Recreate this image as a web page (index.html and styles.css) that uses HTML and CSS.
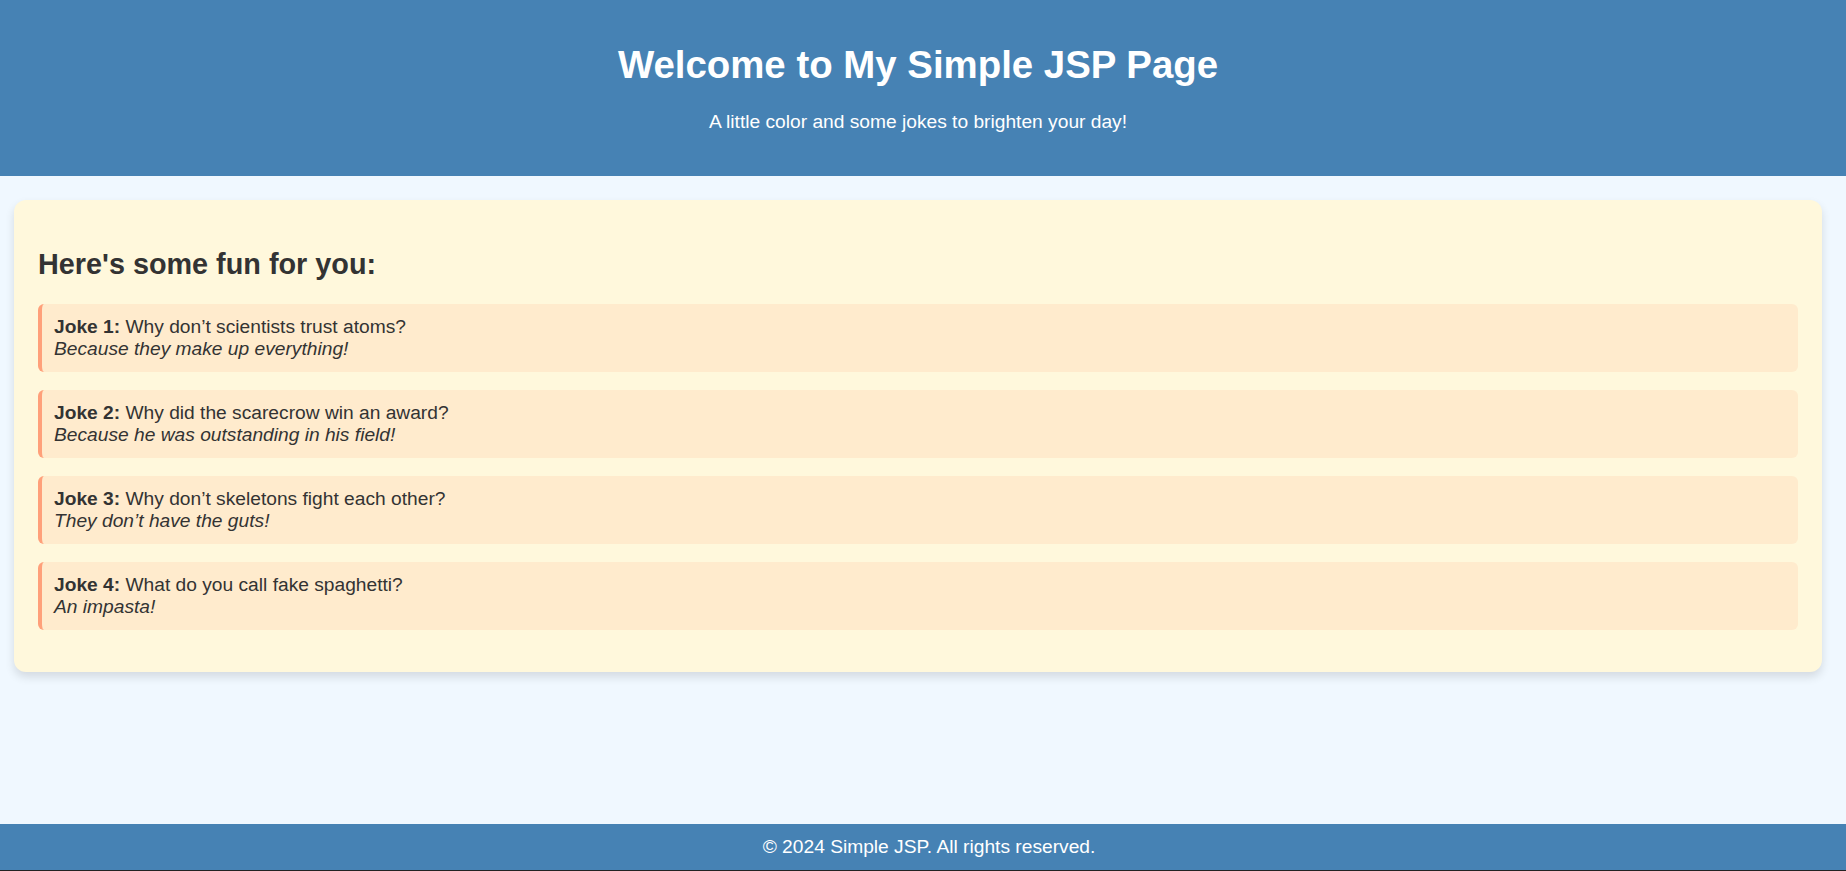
FILE: index.html
```html
<!DOCTYPE html>
<html lang="en">
<head>
<meta charset="UTF-8">
<title>Simple JSP Page</title>
<link rel="stylesheet" href="styles.css">
</head>
<body>
  <header class="site-header">
    <h1 class="site-title">Welcome to My Simple JSP Page</h1>
    <p class="site-subtitle">A little color and some jokes to brighten your day!</p>
  </header>
  <main class="main">
    <section class="card">
      <h2 class="card-title">Here's some fun for you:</h2>
      <div class="joke">
        <div><strong>Joke 1:</strong> Why don’t scientists trust atoms?</div>
        <div class="punchline">Because they make up everything!</div>
      </div>
      <div class="joke">
        <div><strong>Joke 2:</strong> Why did the scarecrow win an award?</div>
        <div class="punchline">Because he was outstanding in his field!</div>
      </div>
      <div class="joke">
        <div><strong>Joke 3:</strong> Why don’t skeletons fight each other?</div>
        <div class="punchline">They don’t have the guts!</div>
      </div>
      <div class="joke">
        <div><strong>Joke 4:</strong> What do you call fake spaghetti?</div>
        <div class="punchline">An impasta!</div>
      </div>
    </section>
  </main>
  <footer class="site-footer">© 2024 Simple JSP. All rights reserved.</footer>
</body>
</html>
```
FILE: styles.css
```css
html, body {
  margin: 0;
  padding: 0;
}
body {
  font-family: "Liberation Sans", Arial, sans-serif;
  font-size: 19.2px;
  color: #333;
  background: #f0f8ff;
  min-height: 100vh;
  display: flex;
  flex-direction: column;
}
.site-header {
  background: #4682b4;
  color: #fff;
  text-align: center;
  height: 176px;
  box-sizing: border-box;
  padding: 43px 10px 0 0;
}
.site-title {
  margin: 0 0 24px;
  font-size: 38.4px;
  font-weight: bold;
  line-height: normal;
}
.site-subtitle {
  margin: 0;
  font-size: 19.2px;
}
.main {
  flex: 1;
  padding: 24px 24px 0 14px;
}
.card {
  background: #fff8dc;
  border-radius: 12px;
  box-shadow: 0 5px 10px rgba(0, 0, 0, 0.12);
  padding: 24px;
}
.card-title {
  font-size: 28.8px;
  margin: 0 0 23px;
  padding-top: 24px;
  color: #333;
}
.joke {
  background: #ffebcd;
  border-left: 4.8px solid #ffa07a;
  border-radius: 6px;
  padding: 12px;
  margin-bottom: 18px;
}
.punchline {
  font-style: italic;
}
.site-footer {
  background: #4682b4;
  color: #fff;
  text-align: center;
  padding: 12px 0 12px 12px;
  font-size: 19.2px;
  border-bottom: 1px solid #222;
}
```
